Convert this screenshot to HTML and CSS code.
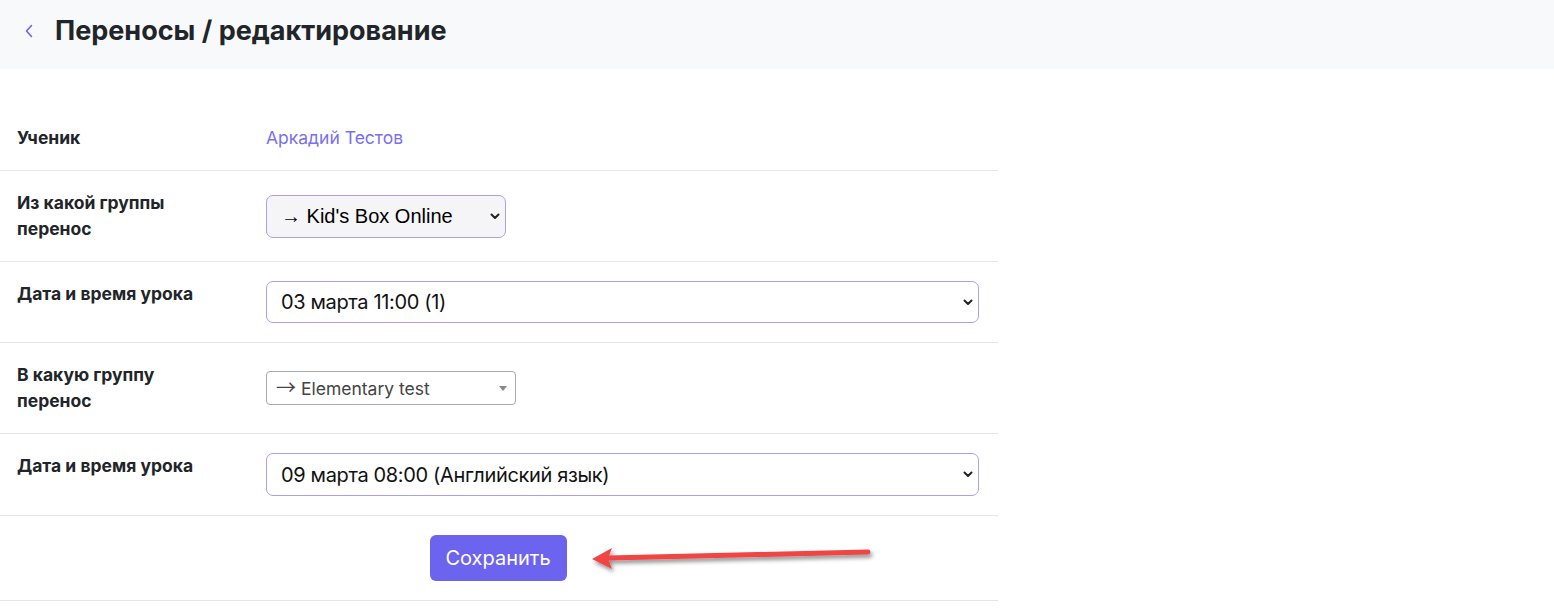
FILE: index.html
```html
<!DOCTYPE html>
<html lang="ru">
<head>
<meta charset="utf-8">
<title>Переносы / редактирование</title>
<link rel="stylesheet" href="styles.css">
</head>
<body>
<header class="page-header">
  <a class="back" href="#" aria-label="Назад">
    <svg width="10" height="14" viewBox="0 0 10 14"><polyline points="7.5,1.5 2.5,7 7.5,12.5" fill="none" stroke="#6c63f0" stroke-width="1.6" stroke-linecap="round" stroke-linejoin="round"/></svg>
  </a>
  <h1 class="title">Переносы / редактирование</h1>
</header>

<main class="content">
  <table class="form-table">
    <tr>
      <th>Ученик</th>
      <td><a class="student" href="#">Аркадий Тестов</a></td>
    </tr>
    <tr>
      <th>Из какой группы<br>перенос</th>
      <td>
        <div class="sel sel-small">
          <select class="native native-grey"><option>→ Kid's Box Online</option></select>
          <svg class="chev" width="10" height="7" viewBox="0 0 10 7"><polyline points="1.5,1.5 5,5 8.5,1.5" fill="none" stroke="#222" stroke-width="2" stroke-linecap="round" stroke-linejoin="round"/></svg>
        </div>
      </td>
    </tr>
    <tr>
      <th>Дата и время урока</th>
      <td>
        <div class="sel sel-short">
          <select class="native native-date"><option>03 марта 11:00 (1)</option></select>
          <svg class="chev" width="10" height="7" viewBox="0 0 10 7"><polyline points="1.5,1.5 5,5 8.5,1.5" fill="none" stroke="#222" stroke-width="2" stroke-linecap="round" stroke-linejoin="round"/></svg>
        </div>
      </td>
    </tr>
    <tr>
      <th>В какую группу<br>перенос</th>
      <td>
        <div class="select2">
          <span class="select2-text"><span class="arr">→</span> Elementary test</span>
          <span class="select2-arrow"></span>
        </div>
      </td>
    </tr>
    <tr>
      <th>Дата и время урока</th>
      <td>
        <div class="sel">
          <select class="native native-date"><option>09 марта 08:00 (Английский язык)</option></select>
          <svg class="chev" width="10" height="7" viewBox="0 0 10 7"><polyline points="1.5,1.5 5,5 8.5,1.5" fill="none" stroke="#222" stroke-width="2" stroke-linecap="round" stroke-linejoin="round"/></svg>
        </div>
      </td>
    </tr>
    <tr>
      <td colspan="2" class="actions">
        <button class="btn-save" type="button">Сохранить</button>
      </td>
    </tr>
  </table>

  <svg class="annotation" width="300" height="40" viewBox="0 0 300 40">
    <defs>
      <filter id="sh" x="-10%" y="-50%" width="120%" height="200%">
        <feDropShadow dx="2" dy="3" stdDeviation="2" flood-color="#000" flood-opacity="0.45"/>
      </filter>
    </defs>
    <g filter="url(#sh)">
      <line x1="24" y1="18" x2="283" y2="12" stroke="#ef4444" stroke-width="5" stroke-linecap="round"/>
      <polygon points="7,19 27,8 23,18.5 27,29" fill="#ef4444"/>
    </g>
  </svg>
</main>
</body>
</html>
```

FILE: styles.css
```css
* { box-sizing: border-box; }

html, body {
  margin: 0;
  padding: 0;
  background: #ffffff;
  font-family: Inter, "Noto Sans", sans-serif;
  color: #212529;
}

.page-header {
  height: 69px;
  background: #f8f9fa;
  display: flex;
  align-items: flex-start;
  padding: 14px 0 0 24px;
}

.back {
  display: flex;
  align-items: center;
  height: 34px;
  width: 31px;
}

.title {
  margin: 0;
  font-size: 27px;
  line-height: 34px;
  font-weight: 700;
  color: #212529;
}

.content {
  position: relative;
  padding-top: 37px;
}

.form-table {
  width: 998px;
  border-collapse: collapse;
}

.form-table tr {
  border-bottom: 1px solid #e5e5e5;
}

.form-table th {
  width: 250px;
  text-align: left;
  vertical-align: top;
  padding: 19px 16px 19px 17px;
  font-size: 17.5px;
  line-height: 26px;
  font-weight: 700;
  color: #212529;
}

.form-table td {
  vertical-align: middle;
  padding: 19px 19px 19px 16px;
  font-size: 17.5px;
  line-height: 26px;
}

.student {
  color: #7a6ff0;
  text-decoration: none;
}

.sel {
  position: relative;
  width: 100%;
  height: 43px;
}

.sel-small {
  width: 240px;
}

.native {
  -webkit-appearance: none;
  appearance: none;
  width: 100%;
  height: 43px;
  margin: 0;
  border: 1px solid #a8a1f3;
  border-radius: 7px;
  background: #ffffff;
  color: #111;
  padding: 0 30px 0 14px;
  outline: none;
}

.sel-short,
.sel-short .native {
  height: 42px;
}

.native-grey {
  background: #f5f5f7;
  font-family: "Liberation Sans", Arial, sans-serif;
  font-size: 20px;
  color: #000;
}

.native-date {
  font-family: Inter, sans-serif;
  font-size: 20px;
  letter-spacing: -0.35px;
}

.chev {
  position: absolute;
  right: 6px;
  top: 18px;
  pointer-events: none;
}

.select2 {
  position: relative;
  width: 250px;
  height: 34px;
  border: 1px solid #aaaaaa;
  border-radius: 4px;
  background: #fff;
  display: flex;
  align-items: center;
  padding-left: 9px;
}

.select2-text {
  font-family: Inter, sans-serif;
  font-size: 17.5px;
  color: #444;
  white-space: nowrap;
}

.arr {
  font-family: "Noto Sans CJK SC", sans-serif;
  font-size: 20px;
}

.select2-arrow {
  position: absolute;
  right: 8px;
  top: 14px;
  width: 0;
  height: 0;
  border-top: 5px solid #888;
  border-left: 4px solid transparent;
  border-right: 4px solid transparent;
}

.actions {
  text-align: center;
}

.form-table td.actions {
  padding: 19px 0;
  line-height: 0;
}

.btn-save {
  width: 137px;
  height: 46px;
  border: none;
  border-radius: 6px;
  background: #6c63ef;
  color: #fff;
  font-family: Inter, sans-serif;
  font-size: 20px;
  line-height: 46px;
  padding: 0;
  transform: translateX(-1px);
}

.annotation {
  position: absolute;
  left: 585px;
  top: 471px;
  overflow: visible;
}
```
